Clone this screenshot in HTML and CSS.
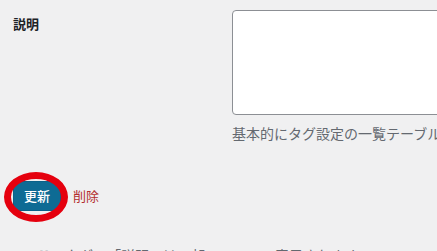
FILE: index.html
```html
<!DOCTYPE html>
<html lang="ja">
<head>
<meta charset="utf-8">
<title>タグを編集</title>
<link rel="stylesheet" href="styles.css">
</head>
<body>
<div class="page">
  <div class="row">
    <div class="label">説明</div>
    <div class="field">
      <textarea class="desc"></textarea>
      <p class="help">基本的にタグ設定の一覧テーブルには表示されませんが、テーマによっては表示されます。</p>
    </div>
  </div>
  <div class="actions">
    <span class="btnwrap">
      <button class="btn" type="button">更新</button>
      <span class="ring"></span>
    </span>
    <a class="delete" href="#">削除</a>
  </div>
  <p class="note">このタグの「説明」は一部のテーマで表示されます。</p>
</div>
</body>
</html>
```

FILE: styles.css
```css
html, body {
  margin: 0;
  padding: 0;
}
body {
  background: #f0f0f1;
  overflow: hidden;
  font-family: "Noto Sans CJK JP", "Noto Sans", sans-serif;
  color: #1d2327;
}
.page {
  padding: 10px 0 0 13px;
}
.row {
  display: grid;
  grid-template-columns: 219px 400px;
}
.label {
  font-size: 13px;
  font-weight: bold;
  line-height: 20px;
  padding-top: 4px;
}
.desc {
  display: block;
  box-sizing: border-box;
  width: 400px;
  height: 105px;
  margin: 0;
  border: 1px solid #8c8f94;
  border-radius: 4px;
  background: #fff;
  resize: none;
}
.help {
  margin: 8px 0 0;
  font-size: 14px;
  line-height: 20px;
  color: #646970;
  white-space: nowrap;
}
.actions {
  margin-top: 38px;
  display: flex;
  align-items: center;
  gap: 12px;
}
.btnwrap {
  position: relative;
  display: inline-block;
}
.btn {
  display: block;
  height: 30px;
  padding: 0 10px;
  margin: 0;
  border: 1px solid #0a6289;
  border-radius: 3px;
  background: #0e6b94;
  color: #fff;
  font-family: "Noto Sans CJK JP", "Noto Sans", sans-serif;
  font-size: 13px;
  font-weight: 500;
  line-height: 28px;
  cursor: pointer;
}
.ring {
  position: absolute;
  left: -9px;
  top: -9px;
  width: 50px;
  height: 36px;
  border: 7px solid #e5000e;
  border-radius: 50%;
  pointer-events: none;
}
.delete {
  font-size: 13px;
  line-height: 20px;
  color: #b32d2e;
  text-decoration: none;
}
.note {
  margin: 34px 0 0;
  padding-left: 24px;
  font-size: 14px;
  line-height: 20px;
  color: #646970;
  white-space: nowrap;
}
```
